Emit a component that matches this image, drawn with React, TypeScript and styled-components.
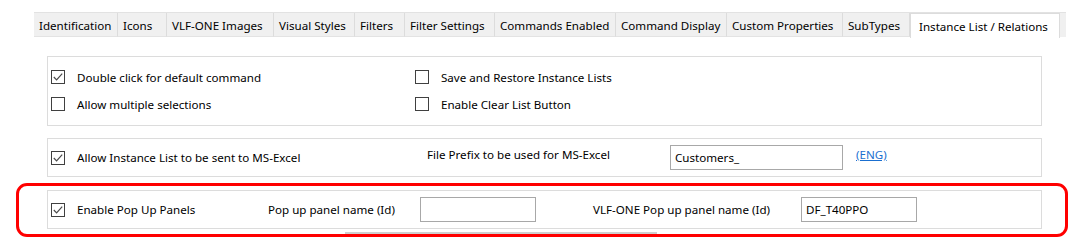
import React from "react";
import styled, { createGlobalStyle } from "styled-components";

const Global = createGlobalStyle`
  html, body { margin: 0; padding: 0; background: #ffffff; }
  body { font-family: "Noto Sans", "Open Sans", sans-serif; color: #000; }
`;

const Page = styled.div`
  width: 1086px;
  height: 250px;
  padding-top: 12px;
  box-sizing: border-box;
  overflow: hidden;
`;

const TabStrip = styled.div`
  margin-left: 34px;
  width: 1032px;
  height: 25px;
  box-sizing: border-box;
  display: flex;
  align-items: flex-start;
  background: #f0f0f0;
  border-top: 1px solid #e2e2e2;
`;

const Tab = styled.div<{ $w: number; $active?: boolean }>`
  width: ${(p) => p.$w}px;
  flex: none;
  box-sizing: border-box;
  height: ${(p) => (p.$active ? 25 : 24)}px;
  padding-left: ${(p) => (p.$active ? 8 : 5)}px;
  padding-top: 1px;
  display: flex;
  align-items: center;
  font-size: 11.6px;
  white-space: nowrap;
  overflow: hidden;
  background: ${(p) => (p.$active ? "#ffffff" : "#f0f0f0")};
  border-right: 1px solid #dcdcdc;
  border-bottom: ${(p) => (p.$active ? "none" : "1px solid #e3e3e3")};
  border-left: ${(p) => (p.$active ? "1px solid #dcdcdc" : "none")};
  border-top: ${(p) => (p.$active ? "1px solid #dcdcdc" : "none")};
  position: relative;
  z-index: ${(p) => (p.$active ? 1 : 0)};
`;

const Panels = styled.div`
  display: flex;
  flex-direction: column;
  margin-top: 19px;
`;

const Panel = styled.div<{ $h: number; $gap?: number }>`
  margin-left: 47px;
  margin-top: ${(p) => p.$gap || 0}px;
  width: 995px;
  height: ${(p) => p.$h}px;
  box-sizing: border-box;
  border: 1px solid #dcdcdc;
  background: #fff;
`;

const TwoColGrid = styled.div`
  display: grid;
  grid-template-columns: 364px 1fr;
  row-gap: 11px;
  padding: 12px 0 0 3px;
`;

const Row = styled.div`
  display: flex;
  align-items: center;
  height: 100%;
  padding-left: 3px;
`;

const CheckItem = styled.label<{ $w?: number }>`
  display: flex;
  align-items: center;
  height: 16px;
  font-size: 11.6px;
  white-space: nowrap;
  ${(p) => (p.$w ? `width: ${p.$w}px; flex: none;` : "")}
`;

const Box = styled.span`
  width: 14px;
  height: 14px;
  box-sizing: border-box;
  border: 1px solid #404040;
  background: #fff;
  margin-right: 12px;
  display: flex;
  align-items: center;
  justify-content: center;
  flex: none;
`;

const Label = styled.span<{ $w: number; $up?: number }>`
  font-size: 11.6px;
  white-space: nowrap;
  width: ${(p) => p.$w}px;
  flex: none;
  position: relative;
  top: ${(p) => -(p.$up || 0)}px;
`;

const Input = styled.div<{ $w: number; $mr?: number }>`
  width: ${(p) => p.$w}px;
  height: 25px;
  flex: none;
  box-sizing: border-box;
  border: 1px solid #a8a8a8;
  margin-right: ${(p) => p.$mr || 0}px;
  padding-left: 4px;
  display: flex;
  align-items: center;
  font-size: 11.6px;
  background: #fff;
`;

const Link = styled.a`
  color: #1a6fd0;
  text-decoration: underline;
  font-size: 11.6px;
  position: relative;
  top: -3px;
`;

const Highlight = styled.div`
  margin-top: 6px;
  margin-left: 16px;
  width: 1052px;
  box-sizing: border-box;
  border: 3px solid #ff0000;
  border-radius: 11px;
  padding: 4px 0 0 28px;
`;

const InnerPanel = styled.div`
  width: 995px;
  height: 39px;
  box-sizing: border-box;
  border: 1px solid #dcdcdc;
`;

const GreyLine = styled.div`
  margin-top: 3px;
  margin-left: 298px;
  width: 312px;
  height: 2px;
  background: #cfcfcf;
`;

const Check = ({ on }: { on?: boolean }) => (
  <Box>
    {on && (
      <svg width="12" height="12" viewBox="0 0 12 12">
        <path d="M1.8 6 L4.6 8.8 L10.2 2.6" fill="none" stroke="#4a4a4a" strokeWidth="1.2" />
      </svg>
    )}
  </Box>
);

const tabs: [string, number][] = [
  ["Identification", 84],
  ["Icons", 49],
  ["VLF-ONE Images", 107],
  ["Visual Styles", 81],
  ["Filters", 50],
  ["Filter Settings", 90],
  ["Commands Enabled", 121],
  ["Command Display", 111],
  ["Custom Properties", 116],
  ["SubTypes", 67],
];

export default function App() {
  return (
    <Page>
      <Global />
      <TabStrip>
        {tabs.map(([t, w]) => (
          <Tab key={t} $w={w}>
            {t}
          </Tab>
        ))}
        <Tab $w={150} $active>
          Instance List / Relations
        </Tab>
      </TabStrip>
      <Panels>
        <Panel $h={70}>
          <TwoColGrid>
            <CheckItem>
              <Check on />
              Double click for default command
            </CheckItem>
            <CheckItem>
              <Check />
              Save and Restore Instance Lists
            </CheckItem>
            <CheckItem>
              <Check />
              Allow multiple selections
            </CheckItem>
            <CheckItem>
              <Check />
              Enable Clear List Button
            </CheckItem>
          </TwoColGrid>
        </Panel>
        <Panel $h={39} $gap={12}>
          <Row>
            <CheckItem $w={376}>
              <Check on />
              Allow Instance List to be sent to MS-Excel
            </CheckItem>
            <Label $w={243} $up={3}>
              File Prefix to be used for MS-Excel
            </Label>
            <Input $w={173} $mr={13}>
              Customers_
            </Input>
            <Link>(ENG)</Link>
          </Row>
        </Panel>
        <Highlight>
          <InnerPanel>
            <Row>
              <CheckItem $w={217}>
                <Check on />
                Enable Pop Up Panels
              </CheckItem>
              <Label $w={152}>Pop up panel name (Id)</Label>
              <Input $w={116} $mr={57} />
              <Label $w={208}>VLF-ONE Pop up panel name (Id)</Label>
              <Input $w={116}>DF_T40PPO</Input>
            </Row>
          </InnerPanel>
          <GreyLine />
        </Highlight>
      </Panels>
    </Page>
  );
}
